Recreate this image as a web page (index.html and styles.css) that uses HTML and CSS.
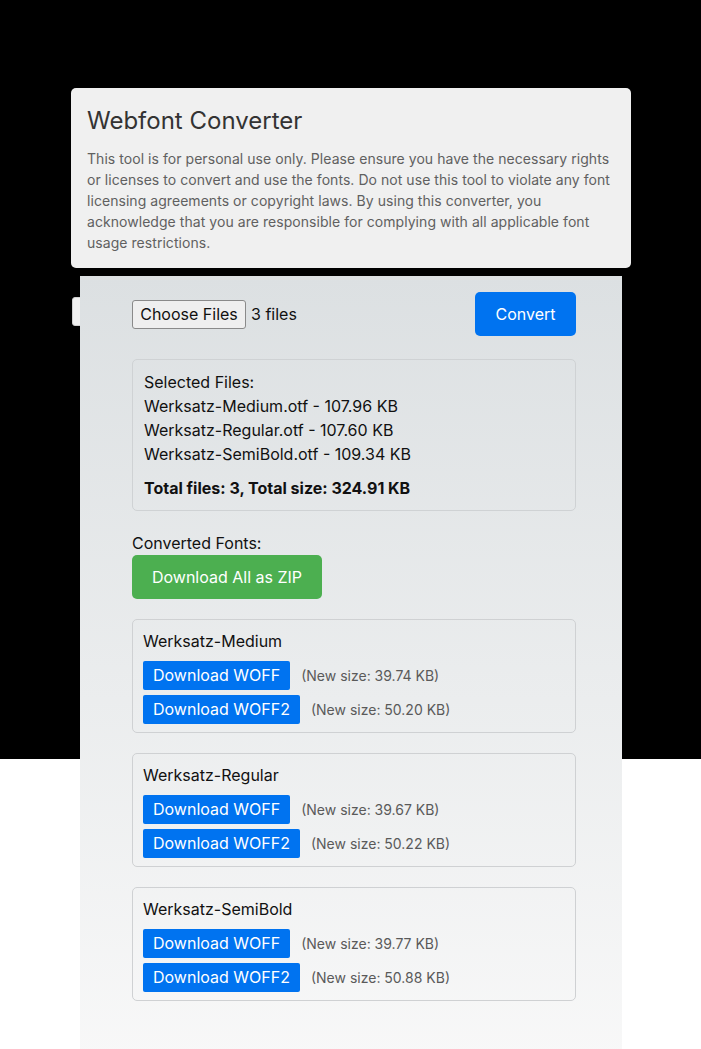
FILE: index.html
```html
<!DOCTYPE html>
<html lang="en">
<head>
<meta charset="utf-8">
<title>Webfont Converter</title>
<link rel="stylesheet" href="styles.css">
</head>
<body>
<div class="page">
  <div class="ghost"></div>
  <header class="intro">
    <h1 class="intro-title">Webfont Converter</h1>
    <p class="intro-text">This tool is for personal use only. Please ensure you have the necessary rights or licenses to convert and use the fonts. Do not use this tool to violate any font licensing agreements or copyright laws. By using this converter, you acknowledge that you are responsible for complying with all applicable font usage restrictions.</p>
  </header>
  <main class="panel">
    <div class="upload-row">
      <div class="file-picker">
        <span class="file-btn">Choose Files</span>
        <span class="file-count">3 files</span>
      </div>
      <button class="btn btn-primary">Convert</button>
    </div>
    <section class="selected">
      <div class="line">Selected Files:</div>
      <div class="line">Werksatz-Medium.otf - 107.96 KB</div>
      <div class="line">Werksatz-Regular.otf - 107.60 KB</div>
      <div class="line">Werksatz-SemiBold.otf - 109.34 KB</div>
      <div class="total">Total files: 3, Total size: 324.91 KB</div>
    </section>
    <div class="converted-label">Converted Fonts:</div>
    <button class="btn btn-green">Download All as ZIP</button>
    <div class="cards">
      <section class="font-card">
        <div class="font-name">Werksatz-Medium</div>
        <div class="dl-row"><span class="dl-btn">Download WOFF</span><span class="dl-size">(New size: 39.74 KB)</span></div>
        <div class="dl-row"><span class="dl-btn">Download WOFF2</span><span class="dl-size">(New size: 50.20 KB)</span></div>
      </section>
      <section class="font-card">
        <div class="font-name">Werksatz-Regular</div>
        <div class="dl-row"><span class="dl-btn">Download WOFF</span><span class="dl-size">(New size: 39.67 KB)</span></div>
        <div class="dl-row"><span class="dl-btn">Download WOFF2</span><span class="dl-size">(New size: 50.22 KB)</span></div>
      </section>
      <section class="font-card">
        <div class="font-name">Werksatz-SemiBold</div>
        <div class="dl-row"><span class="dl-btn">Download WOFF</span><span class="dl-size">(New size: 39.77 KB)</span></div>
        <div class="dl-row"><span class="dl-btn">Download WOFF2</span><span class="dl-size">(New size: 50.88 KB)</span></div>
      </section>
    </div>
  </main>
</div>
</body>
</html>
```
FILE: styles.css
```css
html {
  background: #fff;
}
body {
  margin: 0;
  font-family: Inter, "Noto Sans", "DejaVu Sans", sans-serif;
  color: #111;
  background: linear-gradient(to bottom, #000 0, #000 759px, #fff 759px, #fff 100%) no-repeat;
  min-height: 1049px;
}
.page {
  position: relative;
  padding-top: 88px;
  height: 961px;
  overflow: hidden;
}
.ghost {
  position: absolute;
  left: 72px;
  top: 297px;
  width: 40px;
  height: 27px;
  background: #f0f0f0;
  border: 1px solid #cfcfcf;
  border-radius: 3px;
  z-index: 0;
}
.intro {
  position: relative;
  z-index: 1;
  margin-left: 71px;
  width: 528px;
  padding: 18px 16px 15px;
  background: #f0f0f0;
  border-radius: 5px;
}
.intro-title {
  margin: 0;
  font-size: 24px;
  line-height: 30px;
  font-weight: 400;
  color: #333;
}
.intro-text {
  margin: 12px 0 0;
  font-size: 14px;
  line-height: 21px;
  letter-spacing: 0.05px;
  color: #606060;
}
.panel {
  position: relative;
  z-index: 1;
  margin: 8px 0 0 80px;
  width: 444px;
  padding: 16px 46px 0 52px;
  height: 800px;
  background: linear-gradient(to bottom, #dce0e2 0, #f9f9f9 100%);
}
.upload-row {
  display: flex;
  justify-content: space-between;
  align-items: center;
}
.file-picker {
  display: flex;
  align-items: center;
  gap: 5px;
  font-size: 16px;
}
.file-btn {
  display: inline-block;
  box-sizing: border-box;
  width: 114px;
  height: 29px;
  line-height: 27px;
  text-align: center;
  background: #efefef;
  border: 1px solid #8a8a8a;
  border-radius: 3px;
  color: #111;
}
.file-count {
  color: #111;
}
.btn {
  box-sizing: border-box;
  font-family: inherit;
  font-size: 16px;
  line-height: 24px;
  color: #fff;
  border: none;
  border-radius: 5px;
  padding: 10px 0;
  text-align: center;
  white-space: nowrap;
}
.btn-primary {
  background: #0073f0;
  width: 101px;
}
.btn-green {
  background: #4caf50;
  width: 190px;
  display: block;
}
.selected {
  margin-top: 23px;
  border: 1px solid #cfd2d4;
  border-radius: 5px;
  padding: 10px 11px;
  font-size: 16px;
  line-height: 24px;
}
.total {
  margin-top: 10px;
  font-weight: 700;
}
.converted-label {
  margin-top: 20px;
  font-size: 16px;
  line-height: 24px;
}
.cards {
  margin-top: 20px;
  display: flex;
  flex-direction: column;
  gap: 20px;
}
.font-card {
  border: 1px solid #cfd1d3;
  border-radius: 5px;
  padding: 9px 10px 8px;
}
.font-name {
  font-size: 16px;
  line-height: 24px;
  margin-bottom: 8px;
}
.dl-row {
  display: flex;
  align-items: center;
  gap: 11px;
}
.dl-row + .dl-row {
  margin-top: 5px;
}
.dl-btn {
  display: inline-block;
  height: 29px;
  line-height: 29px;
  padding: 0 10px;
  background: #0073f0;
  color: #fff;
  font-size: 16px;
  border-radius: 2px;
}
.dl-size {
  font-size: 14px;
  color: #5a5a5a;
}
```
